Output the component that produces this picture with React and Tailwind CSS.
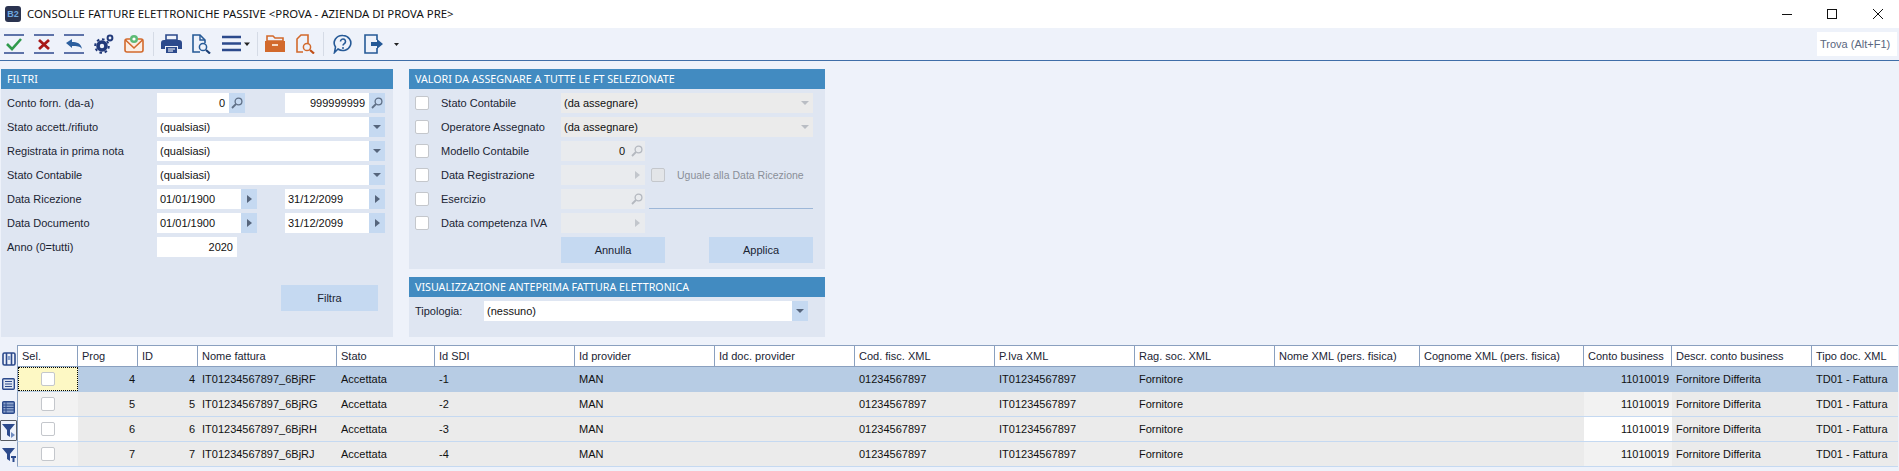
import React from "react";

const Search = ({ muted }) => (
  <svg width="12" height="12" viewBox="0 0 12 12" fill="none" stroke={muted ? "#b4b8bf" : "#5f6f86"} strokeWidth="1.3">
    <circle cx="7.5" cy="4.5" r="3.4" />
    <path d="M5 7 1 11" strokeWidth="1.8" />
  </svg>
);

const ArrowRight = ({ muted }) => (
  <svg width="5" height="8" viewBox="0 0 5 8"><path d="M0 0l5 4-5 4z" fill={muted ? "#c2c6cc" : "#56657c"} /></svg>
);

const ArrowDown = ({ muted }) => (
  <svg width="8" height="4" viewBox="0 0 8 4"><path d="M0 0h8L4 4z" fill={muted ? "#b9bdc4" : "#56657c"} /></svg>
);

const Field = ({ w, right, children }) => (
  <div className={`h-5 bg-white flex items-center text-[#111] whitespace-nowrap ${w} ${right ? "justify-end pr-[4px]" : "pl-[3px]"}`}>{children}</div>
);

const Btn = ({ children }) => (
  <div className="h-5 w-4 bg-[#c5d9f1] flex items-center justify-center shrink-0">{children}</div>
);

const Row = ({ label, children }) => (
  <div className="flex items-center h-5">
    <div className="w-[156px] pl-[6px] text-[#1a2433] whitespace-nowrap">{label}</div>
    {children}
  </div>
);

const Check = ({ disabled }) => (
  <div className={`w-[14px] h-[14px] rounded-[2px] border border-[#c4c7cc] ${disabled ? "bg-[#e3e5e8]" : "bg-white"}`} />
);

const DisabledField = ({ children, icon }) => (
  <div className="h-5 w-[84px] bg-[#e9ebee] flex items-center text-[#111]">
    <div className="flex-1 text-right pr-[4px]">{children}</div>
    <div className="w-4 flex items-center justify-center">{icon}</div>
  </div>
);

const DisabledCombo = ({ children }) => (
  <div className="h-5 w-[252px] bg-[#ebebeb] flex items-center justify-between pl-[3px] pr-1 text-[#111]">
    <span>{children}</span>
    <ArrowDown muted />
  </div>
);

const AssignRow = ({ label, children }) => (
  <div className="flex items-center h-5">
    <div className="w-8 pl-[6px]"><Check /></div>
    <div className="w-[120px] text-[#1a2433] whitespace-nowrap">{label}</div>
    {children}
  </div>
);

const PanelHeader = ({ children }) => (
  <div className="h-5 bg-[#428bc1] text-white font-['Noto_Sans',sans-serif] text-[10.7px] flex items-center pl-[6px] shrink-0 whitespace-nowrap">{children}</div>
);

const cols = [
  "Sel.", "Prog", "ID", "Nome fattura", "Stato", "Id SDI", "Id provider", "Id doc. provider", "Cod. fisc. XML", "P.Iva XML",
  "Rag. soc. XML", "Nome XML (pers. fisica)", "Cognome XML (pers. fisica)", "Conto business", "Descr. conto business", "Tipo doc. XML",
];

const rows = [
  { n: 4, nome: "IT01234567897_6BjRF", sdi: "-1" },
  { n: 5, nome: "IT01234567897_6BjRG", sdi: "-2" },
  { n: 6, nome: "IT01234567897_6BjRH", sdi: "-3" },
  { n: 7, nome: "IT01234567897_6BjRJ", sdi: "-4" },
];

const gridCols = "grid-cols-[60px_60px_60px_139px_98px_140px_140px_140px_140px_140px_140px_145px_164px_88px_140px_86px]";

const Cell = ({ right, className = "", children }) => (
  <div className={`flex items-center overflow-hidden whitespace-nowrap ${right ? "justify-end pr-[3px]" : "pl-[4px]"} ${className}`}>{children}</div>
);

const Sep = ({ className }) => <div className={`w-px h-6 bg-[#d5dbe6] ${className}`} />;

const ToolbarIcons = () => (
  <div className="flex items-center h-8 pl-1">
    {/* conferma */}
    <svg width="20" height="20" viewBox="0 0 20 20" className="mr-[10px]" fill="none">
      <path d="M0 1h20M0 19h20" stroke="#2f4a8f" strokeWidth="1.5" />
      <path d="M3 10l5 5 9-10" stroke="#2f9a4c" strokeWidth="2.6" />
    </svg>
    {/* annulla */}
    <svg width="20" height="20" viewBox="0 0 20 20" className="mr-[10px]" fill="none">
      <path d="M0 1h20M0 19h20" stroke="#2f4a8f" strokeWidth="1.5" />
      <path d="M5 6l10 9M15 6 5 15" stroke="#a81818" strokeWidth="2.8" />
    </svg>
    {/* indietro */}
    <svg width="20" height="20" viewBox="0 0 20 20" className="mr-[10px]" fill="none">
      <path d="M0 1h20M0 19h20" stroke="#2f4a8f" strokeWidth="1.5" />
      <path d="M2 9l6-4v3c5 0 9 1 10 7-2-3-5-3-10-3v2z" fill="#2c5f9e" />
    </svg>
    {/* ingranaggi */}
    <svg width="20" height="20" viewBox="0 0 20 20" className="mr-[10px]" fill="none">
      <circle cx="8" cy="12" r="4" stroke="#223a7a" strokeWidth="3.6" />
      <circle cx="8" cy="12" r="6.8" stroke="#223a7a" strokeWidth="2" strokeDasharray="2.6 2.7" />
      <circle cx="16" cy="4" r="2.4" stroke="#223a7a" strokeWidth="2" />
    </svg>
    {/* mail */}
    <svg width="20" height="20" viewBox="0 0 20 20" className="mr-[9px]" fill="none">
      <rect x="1" y="5" width="18" height="13" rx="2" fill="#fbeee5" stroke="#d2692c" strokeWidth="1.6" />
      <path d="M1.5 6l8.500 8 8.500-8" stroke="#d2692c" strokeWidth="1.6" />
      <circle cx="10" cy="5" r="4" fill="#5dbb77" />
      <circle cx="10" cy="5" r="1.6" fill="#fff" />
    </svg>
    <Sep className="mr-[7px]" />
    {/* stampa */}
    <svg width="21" height="20" viewBox="0 0 21 20" className="mr-[9px]">
      <path d="M5 1h11v5H5z" fill="none" stroke="#2c4a8c" strokeWidth="1.6" />
      <path d="M3 6h15a3 3 0 0 1 3 3v6h-4v-3H4v3H0V9a3 3 0 0 1 3-3z" fill="#2c4a8c" />
      <path d="M5 13h11v6H5z" fill="#2c4a8c" />
      <path d="M7 15h7M7 17h5" stroke="#fff" strokeWidth="1" />
    </svg>
    {/* anteprima */}
    <svg width="20" height="20" viewBox="0 0 20 20" className="mr-[11px]" fill="none">
      <path d="M9 18H2V1h7l5 5v3" stroke="#265a97" strokeWidth="1.6" />
      <path d="M9 1v5h5" stroke="#265a97" strokeWidth="1.4" />
      <circle cx="12" cy="13" r="3.6" stroke="#265a97" strokeWidth="1.5" />
      <path d="M15 16l4 3.5" stroke="#1c3f75" strokeWidth="2.2" />
    </svg>
    {/* menu */}
    <svg width="28" height="20" viewBox="0 0 28 20" className="mr-[7px]">
      <path d="M0 3h19M0 9.500h19M0 16h19" stroke="#2c4a8c" strokeWidth="2.6" />
      <path d="M22 8.500h6l-3 3.500z" fill="#222" />
    </svg>
    <Sep className="mr-[7px]" />
    {/* cartella */}
    <svg width="20" height="20" viewBox="0 0 20 20" className="mr-[10px]">
      <path d="M2 2h6l2 2h8v3H2z" fill="none" stroke="#d2692c" strokeWidth="1.6" />
      <path d="M0 7h20v11H0z" fill="#d2692c" />
      <path d="M7 10h6v2H7z" fill="#f6d9c4" />
    </svg>
    {/* cerca doc */}
    <svg width="20" height="20" viewBox="0 0 20 20" className="mr-[8px]" fill="none">
      <path d="M8 18H2V5l4-4h7v8" stroke="#d2692c" strokeWidth="1.6" />
      <circle cx="12" cy="13" r="3.6" stroke="#d2692c" strokeWidth="1.5" />
      <path d="M15 16l4 3.5" stroke="#c04f18" strokeWidth="2.2" />
    </svg>
    <Sep className="mr-[9px]" />
    {/* aiuto */}
    <svg width="20" height="20" viewBox="0 0 20 20" className="mr-[10px]" fill="none">
      <path d="M10 1.500a8 7.500 0 1 1-5 13.500l-3.500 3.500 1-5.500a8 7.500 0 0 1 7.500-11.500z" stroke="#265a97" strokeWidth="1.6" />
      <path d="M7.500 7.500a2.500 2.500 0 1 1 3.800 2.100c-.9.6-1.300 1-1.300 2" stroke="#265a97" strokeWidth="1.6" />
      <circle cx="10" cy="14" r="1" fill="#265a97" />
    </svg>
    {/* esci */}
    <svg width="36" height="20" viewBox="0 0 36 20" fill="none">
      <path d="M14 6V1H2v18h12v-5" stroke="#265a97" strokeWidth="1.6" />
      <path d="M8 8h6V5l6 5-6 5v-3H8z" fill="#265a97" />
      <path d="M31 9h5l-2.500 3z" fill="#222" />
    </svg>
  </div>
);

const SideIcons = () => (
  <div className="w-[17px] shrink-0 flex flex-col items-center pt-[7px]">
    <svg width="14" height="14" viewBox="0 0 14 14" fill="none">
      <rect x="1" y="1" width="12" height="12" rx="1.500" stroke="#2c4a8c" strokeWidth="1.6" />
      <path d="M4.500 1v12M9.500 1v12" stroke="#2c4a8c" strokeWidth="1.600" />
      <path d="M5.500 4h3v4h-3z" fill="#8aa2cc" />
    </svg>
    <svg width="13" height="12" viewBox="0 0 13 12" fill="none" className="mt-3">
      <rect x=".7" y=".7" width="11.600" height="10.600" rx="1" stroke="#2c4a8c" strokeWidth="1.400" fill="#dfe6f2" />
      <path d="M3 3.500h7M3 6h7M3 8.500h7" stroke="#2c4a8c" strokeWidth="1.100" />
    </svg>
    <svg width="13" height="13" viewBox="0 0 13 13" fill="none" className="mt-[11px]">
      <rect x=".7" y=".7" width="11.600" height="11.600" rx="1" stroke="#2c4a8c" strokeWidth="1.400" fill="#8aa2cc" />
      <path d="M1 4h11M1 6.500h11M1 9h11M4 1v11" stroke="#2c4a8c" strokeWidth="1" />
    </svg>
    <div className="w-[17px] h-[21px] mt-[6px] border border-[#555a62] rounded-[1px] flex items-center justify-center">
      <svg width="14" height="14" viewBox="0 0 14 14"><path d="M0 0h13L8 6v7L5 11V6z" fill="#2c4a8c" /><path d="M9 8l4 3-4 3z" fill="#6f8cc0" /></svg>
    </div>
    <svg width="14" height="14" viewBox="0 0 14 14" className="mt-[7px]"><path d="M0 0h13L8 6v7l-3-2V6z" fill="#2c4a8c" /><path d="M9 8h5v2h-1.500v4h-2v-4H9z" fill="#2c4a8c" /></svg>
  </div>
);

export default function App() {
  return (
    <div className="font-['Liberation_Sans',Arial,sans-serif] w-[1899px] h-[471px] bg-[#eef2fa] overflow-hidden flex flex-col text-[11px] leading-none">
      {/* barra titolo */}
      <div className="h-7 bg-white flex items-center shrink-0">
        <div className="w-4 h-4 ml-[5px] rounded-[3px] bg-[#2a3350] text-[#6fa8e0] text-[9px] font-bold flex items-center justify-center">B2</div>
        <div className="ml-[6px] font-['Noto_Sans',sans-serif] text-[11.4px] text-[#111] flex-1 whitespace-nowrap">CONSOLLE FATTURE ELETTRONICHE PASSIVE &lt;PROVA - AZIENDA DI PROVA PRE&gt;</div>
        <svg width="10" height="10" viewBox="0 0 10 10" className="mr-[35px]"><path d="M0 5.500h10" stroke="#111" /></svg>
        <svg width="10" height="10" viewBox="0 0 10 10" className="mr-9"><rect x=".5" y=".5" width="9" height="9" fill="none" stroke="#111" /></svg>
        <svg width="10" height="10" viewBox="0 0 10 10" className="mr-4"><path d="M0 0l10 10M10 0 0 10" stroke="#111" /></svg>
      </div>

      {/* toolbar */}
      <div className="h-[33px] border-b border-[#3f6ea8] flex items-center justify-between shrink-0">
        <ToolbarIcons />
        <div className="w-20 h-6 bg-white mr-[2px] flex items-center pl-[3px] text-[#5a6780] whitespace-nowrap">Trova (Alt+F1)</div>
      </div>

      {/* pannelli */}
      <div className="flex gap-4 pl-px pt-2 shrink-0 h-[284px]">
        <div className="w-[392px] h-[268px] bg-[#dfe6f2] flex flex-col">
          <PanelHeader>FILTRI</PanelHeader>
          <div className="pt-1 flex flex-col gap-1">
            <Row label="Conto forn. (da-a)">
              <Field w="w-[72px]" right>0</Field><Btn><Search /></Btn>
              <div className="w-10" />
              <Field w="w-[84px]" right>999999999</Field><Btn><Search /></Btn>
            </Row>
            <Row label="Stato accett./rifiuto"><Field w="w-[212px]">(qualsiasi)</Field><Btn><ArrowDown /></Btn></Row>
            <Row label="Registrata in prima nota"><Field w="w-[212px]">(qualsiasi)</Field><Btn><ArrowDown /></Btn></Row>
            <Row label="Stato Contabile"><Field w="w-[212px]">(qualsiasi)</Field><Btn><ArrowDown /></Btn></Row>
            <Row label="Data Ricezione">
              <Field w="w-[84px]">01/01/1900</Field><Btn><ArrowRight /></Btn>
              <div className="w-7" />
              <Field w="w-[84px]">31/12/2099</Field><Btn><ArrowRight /></Btn>
            </Row>
            <Row label="Data Documento">
              <Field w="w-[84px]">01/01/1900</Field><Btn><ArrowRight /></Btn>
              <div className="w-7" />
              <Field w="w-[84px]">31/12/2099</Field><Btn><ArrowRight /></Btn>
            </Row>
            <Row label="Anno (0=tutti)"><Field w="w-20" right>2020</Field></Row>
            <div className="flex justify-end pr-[15px] pt-6">
              <div className="w-[97px] h-[26px] bg-[#c5d9f1] flex items-center justify-center text-[#1a2433]">Filtra</div>
            </div>
          </div>
        </div>

        <div className="w-[416px] h-[268px] flex flex-col gap-2">
          <div className="h-[200px] bg-[#dfe6f2] flex flex-col">
            <PanelHeader>VALORI DA ASSEGNARE A TUTTE LE FT SELEZIONATE</PanelHeader>
            <div className="pt-1 flex flex-col gap-1">
              <AssignRow label="Stato Contabile"><DisabledCombo>(da assegnare)</DisabledCombo></AssignRow>
              <AssignRow label="Operatore Assegnato"><DisabledCombo>(da assegnare)</DisabledCombo></AssignRow>
              <AssignRow label="Modello Contabile"><DisabledField icon={<Search muted />}>0</DisabledField></AssignRow>
              <AssignRow label="Data Registrazione">
                <DisabledField icon={<ArrowRight muted />} />
                <div className="ml-[6px]"><Check disabled /></div>
                <div className="ml-3 text-[10.5px] text-[#8a8f98] whitespace-nowrap">Uguale alla Data Ricezione</div>
              </AssignRow>
              <AssignRow label="Esercizio">
                <DisabledField icon={<Search muted />} />
                <div className="ml-1 w-[164px] h-5 border-b border-[#9db7d8]" />
              </AssignRow>
              <AssignRow label="Data competenza IVA"><DisabledField icon={<ArrowRight muted />} /></AssignRow>
              <div className="flex pl-[152px] gap-11">
                <div className="w-[104px] h-[26px] bg-[#c5d9f1] flex items-center justify-center text-[#1a2433]">Annulla</div>
                <div className="w-[104px] h-[26px] bg-[#c5d9f1] flex items-center justify-center text-[#1a2433]">Applica</div>
              </div>
            </div>
          </div>
          <div className="h-[60px] bg-[#dfe6f2] flex flex-col">
            <PanelHeader>VISUALIZZAZIONE ANTEPRIMA FATTURA ELETTRONICA</PanelHeader>
            <div className="flex items-center pt-1 pl-[6px]">
              <div className="w-[69px] text-[#1a2433]">Tipologia:</div>
              <div className="h-5 w-[308px] bg-white flex items-center pl-[3px] text-[#111]">(nessuno)</div>
              <Btn><ArrowDown /></Btn>
            </div>
          </div>
        </div>
      </div>

      {/* griglia */}
      <div className="flex flex-1 min-h-0">
        <SideIcons />
        <div className="w-[1881px]">
          <div className={`grid ${gridCols} h-[22px] bg-white border-y border-l border-[#8aa0bf]`}>
            {cols.map((label, i) => (
              <div key={label} className={`pl-[4px] flex items-center whitespace-nowrap overflow-hidden text-[#1a2433] ${i < cols.length - 1 ? "border-r border-[#8aa0bf]" : ""}`}>{label}</div>
            ))}
          </div>
          {rows.map((r, i) => {
            const first = i === 0;
            const side = first ? "" : i === 2 ? "bg-white" : "bg-[#f2f2f2]";
            return (
              <div key={r.n} className={`grid ${gridCols} h-[25px] border-l border-l-[#8aa0bf] border-b text-[#111] ${first ? "bg-[#b7cce4] border-b-[#b7cce4]" : "bg-[#ebebeb] border-b-[#c5d9f1]"}`}>
                <div className={`flex items-center justify-center ${first ? "bg-[#fdf8c4] border border-dotted border-black" : side}`}><Check /></div>
                <Cell right>{r.n}</Cell>
                <Cell right>{r.n}</Cell>
                <Cell>{r.nome}</Cell>
                <Cell>Accettata</Cell>
                <Cell>{r.sdi}</Cell>
                <Cell>MAN</Cell>
                <Cell />
                <Cell>01234567897</Cell>
                <Cell>IT01234567897</Cell>
                <Cell>Fornitore</Cell>
                <Cell />
                <Cell />
                <Cell right className={side}>11010019</Cell>
                <Cell>Fornitore Differita</Cell>
                <Cell>TD01 - Fattura</Cell>
              </div>
            );
          })}
        </div>
      </div>
    </div>
  );
}
